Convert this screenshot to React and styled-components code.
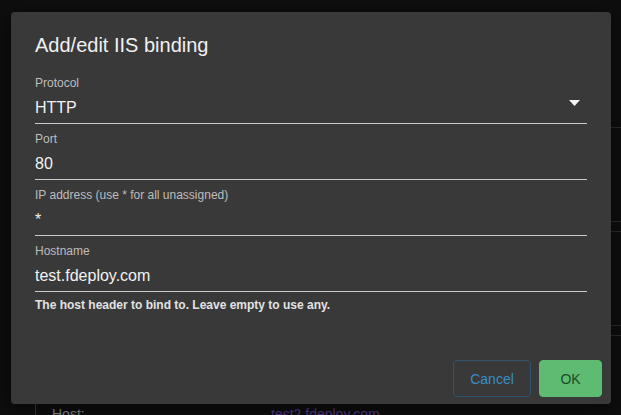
import React from "react";
import styled, { createGlobalStyle } from "styled-components";

const Global = createGlobalStyle`
  html, body { margin: 0; padding: 0; background: #0e0e0e; }
  body { font-family: "Liberation Sans", Arial, sans-serif; overflow: hidden; }
  * { box-sizing: border-box; }
`;

const Screen = styled.div`
  position: relative;
  width: 621px;
  height: 415px;
  overflow: hidden;
  background: #0e0e0e;
`;

const Page = styled.div`
  display: flex;
  flex-direction: column;
`;

const PageRow = styled.div`
  height: ${(p) => p.$h}px;
  margin-left: 300px;
  border-bottom: 1px solid #2c2c2c;
`;

const DetailRow = styled.div`
  margin-left: 35px;
  border-left: 1px solid #3a3a3a;
  padding: 70px 0 0 16px;
  display: grid;
  grid-template-columns: 219px 1fr;
  font-size: 14px;
`;

const DetailKey = styled.span`
  color: #8a8a8a;
`;

const DetailLink = styled.span`
  color: #55378a;
`;

const Backdrop = styled.div`
  position: absolute;
  inset: 0;
  padding: 12px 10px 11px 11px;
  display: flex;
  align-items: flex-start;
`;

const Dialog = styled.div`
  width: 600px;
  height: 392px;
  background: #393939;
  border-radius: 4px;
  box-shadow: 0 4px 20px rgba(0, 0, 0, 0.6);
  display: flex;
  flex-direction: column;
  padding: 21px 24px 0;
  color: #eeeeee;
`;

const Title = styled.h2`
  margin: 0 0 11px;
  font-size: 20px;
  line-height: 24px;
  font-weight: 400;
  color: #f0f0f0;
`;

const Field = styled.div`
  display: flex;
  flex-direction: column;
  padding-top: 8px;
`;

const Label = styled.label`
  font-size: 12px;
  line-height: 14px;
  color: #bdbdbd;
`;

const InputRow = styled.div`
  display: flex;
  align-items: center;
  margin-top: 7px;
  padding-bottom: 5px;
  border-bottom: 1px solid #c8c8c8;
`;

const Value = styled.span`
  flex: 1;
  font-size: 16px;
  line-height: 21px;
  height: 21px;
  color: #f2f2f2;
`;

const Caret = styled.svg`
  width: 11px;
  height: 6px;
  margin: 0 7px 0 0;
  position: relative;
  top: -5px;
`;

const Helper = styled.div`
  margin-top: 6px;
  font-size: 12px;
  line-height: 14px;
  font-weight: 700;
  color: #e2e2e2;
`;

const Actions = styled.div`
  margin-top: auto;
  margin-right: -15px;
  padding-bottom: 7px;
  display: flex;
  justify-content: flex-end;
  gap: 8px;
`;

const Button = styled.button`
  height: 37px;
  min-width: ${(p) => p.$w}px;
  padding: 0 14px;
  border-radius: 4px;
  font-family: "Liberation Sans", Arial, sans-serif;
  font-size: 14px;
  cursor: pointer;
  border: 1px solid ${(p) => (p.$primary ? "#5dbb72" : "#2e5670")};
  background: ${(p) => (p.$primary ? "#5dbb72" : "transparent")};
  color: ${(p) => (p.$primary ? "#1d4d27" : "#3a8dc6")};
`;

const fields = [
  { label: "Protocol", value: "HTTP", select: true },
  { label: "Port", value: "80" },
  { label: "IP address (use * for all unassigned)", value: "*" },
  { label: "Hostname", value: "test.fdeploy.com" },
];

export default function App() {
  return (
    <>
      <Global />
      <Screen>
        <Page>
          <PageRow $h={128} />
          <PageRow $h={94} />
          <PageRow $h={10} />
          <PageRow $h={94} />
          <PageRow $h={10} />
          <DetailRow>
            <DetailKey>Host:</DetailKey>
            <DetailLink>test2.fdeploy.com</DetailLink>
          </DetailRow>
        </Page>
        <Backdrop>
          <Dialog>
            <Title>Add/edit IIS binding</Title>
            {fields.map((f) => (
              <Field key={f.label}>
                <Label>{f.label}</Label>
                <InputRow>
                  <Value>{f.value}</Value>
                  {f.select && (
                    <Caret viewBox="0 0 11 6">
                      <path d="M0 0 L11 0 L5.5 6 Z" fill="#f4f4f4" />
                    </Caret>
                  )}
                </InputRow>
              </Field>
            ))}
            <Helper>The host header to bind to. Leave empty to use any.</Helper>
            <Actions>
              <Button $w={78}>Cancel</Button>
              <Button $w={63} $primary>OK</Button>
            </Actions>
          </Dialog>
        </Backdrop>
      </Screen>
    </>
  );
}
